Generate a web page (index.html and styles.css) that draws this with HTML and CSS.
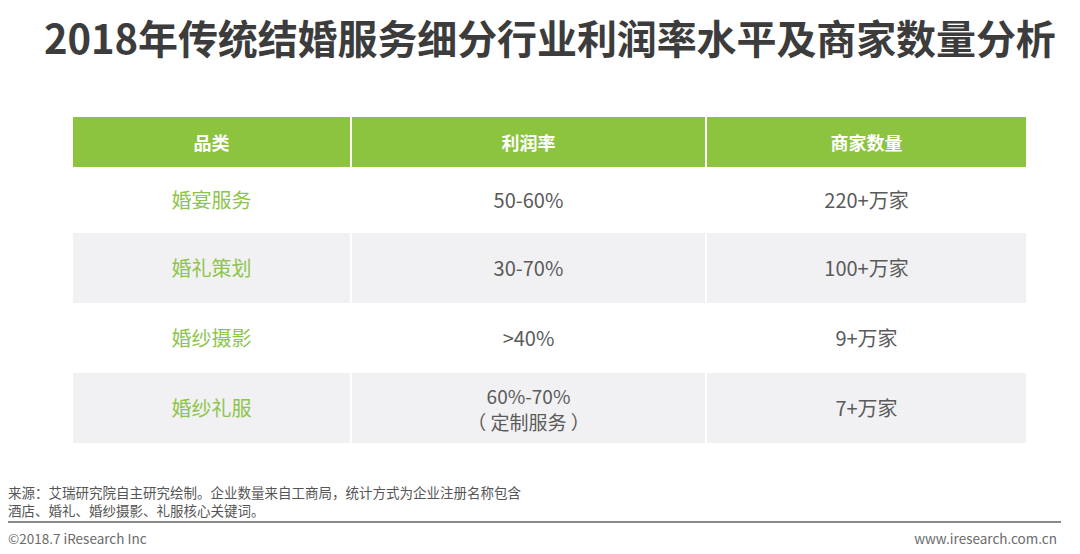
FILE: index.html
```html
<!DOCTYPE html>
<html lang="zh-CN">
<head>
<meta charset="utf-8">
<title>2018年传统结婚服务细分行业利润率水平及商家数量分析</title>
<link rel="stylesheet" href="styles.css">
</head>
<body>
<div class="page">
  <h1 class="title">2018年传统结婚服务细分行业利润率水平及商家数量分析</h1>
  <div class="table">
    <div class="row head">
      <div class="cell">品类</div>
      <div class="cell">利润率</div>
      <div class="cell">商家数量</div>
    </div>
    <div class="row first">
      <div class="cell cat">婚宴服务</div>
      <div class="cell">50-60%</div>
      <div class="cell">220+万家</div>
    </div>
    <div class="row alt">
      <div class="cell cat">婚礼策划</div>
      <div class="cell">30-70%</div>
      <div class="cell">100+万家</div>
    </div>
    <div class="row">
      <div class="cell cat">婚纱摄影</div>
      <div class="cell">&gt;40%</div>
      <div class="cell">9+万家</div>
    </div>
    <div class="row alt">
      <div class="cell cat">婚纱礼服</div>
      <div class="cell two"><span>60%-70%</span><span>（ 定制服务 ）</span></div>
      <div class="cell">7+万家</div>
    </div>
  </div>
  <div class="note">
    <p>来源：艾瑞研究院自主研究绘制。企业数量来自工商局，统计方式为企业注册名称包含</p>
    <p>酒店、婚礼、婚纱摄影、礼服核心关键词。</p>
  </div>
  <div class="footer">
    <span>©2018.7 iResearch Inc</span>
    <span>www.iresearch.com.cn</span>
  </div>
</div>
</body>
</html>
```

FILE: styles.css
```css
* { box-sizing: border-box; }
html, body { margin: 0; padding: 0; background: #fff; }
body {
  width: 1080px;
  height: 554px;
  overflow: hidden;
  font-family: "Noto Sans CJK SC", "Noto Sans", sans-serif;
}
.page {
  padding-top: 15px;
}
.title {
  margin: 0 0 0 44px;
  height: 44px;
  line-height: 44px;
  font-size: 40px;
  font-weight: 700;
  color: #3c3c3c;
  letter-spacing: -0.1px;
  white-space: nowrap;
}
.table {
  margin: 58px 0 0 73px;
  width: 953px;
  display: flex;
  flex-direction: column;
}
.row {
  display: grid;
  grid-template-columns: 277px 353px 319px;
  column-gap: 2px;
  height: 70px;
}
.row.head { height: 50px; }
.row.first { height: 66px; }
.cell {
  display: flex;
  align-items: center;
  justify-content: center;
  text-align: center;
  font-size: 20px;
  color: #5a5a5a;
  line-height: 26px;
}
.head .cell {
  background: #8cc43f;
  color: #fff;
  font-weight: 700;
  font-size: 18px;
}
.alt .cell { background: #f1f1f3; }
.cell.cat { color: #8dc54a; }
.cell.two {
  flex-direction: column;
  font-size: 19px;
  line-height: 26px;
  padding-top: 1px;
}
.note {
  margin: 40px 0 0 8px;
  font-size: 13.5px;
  line-height: 18px;
  color: #555;
}
.note p { margin: 0; }
.footer {
  margin: 2px 0 0 8px;
  width: 1053px;
  border-top: 2px solid #8a8a8a;
  padding-top: 7px;
  display: flex;
  justify-content: space-between;
  font-size: 13.5px;
  line-height: 16px;
  color: #6a6a6a;
}
.footer span:last-child { padding-right: 4px; }
```
